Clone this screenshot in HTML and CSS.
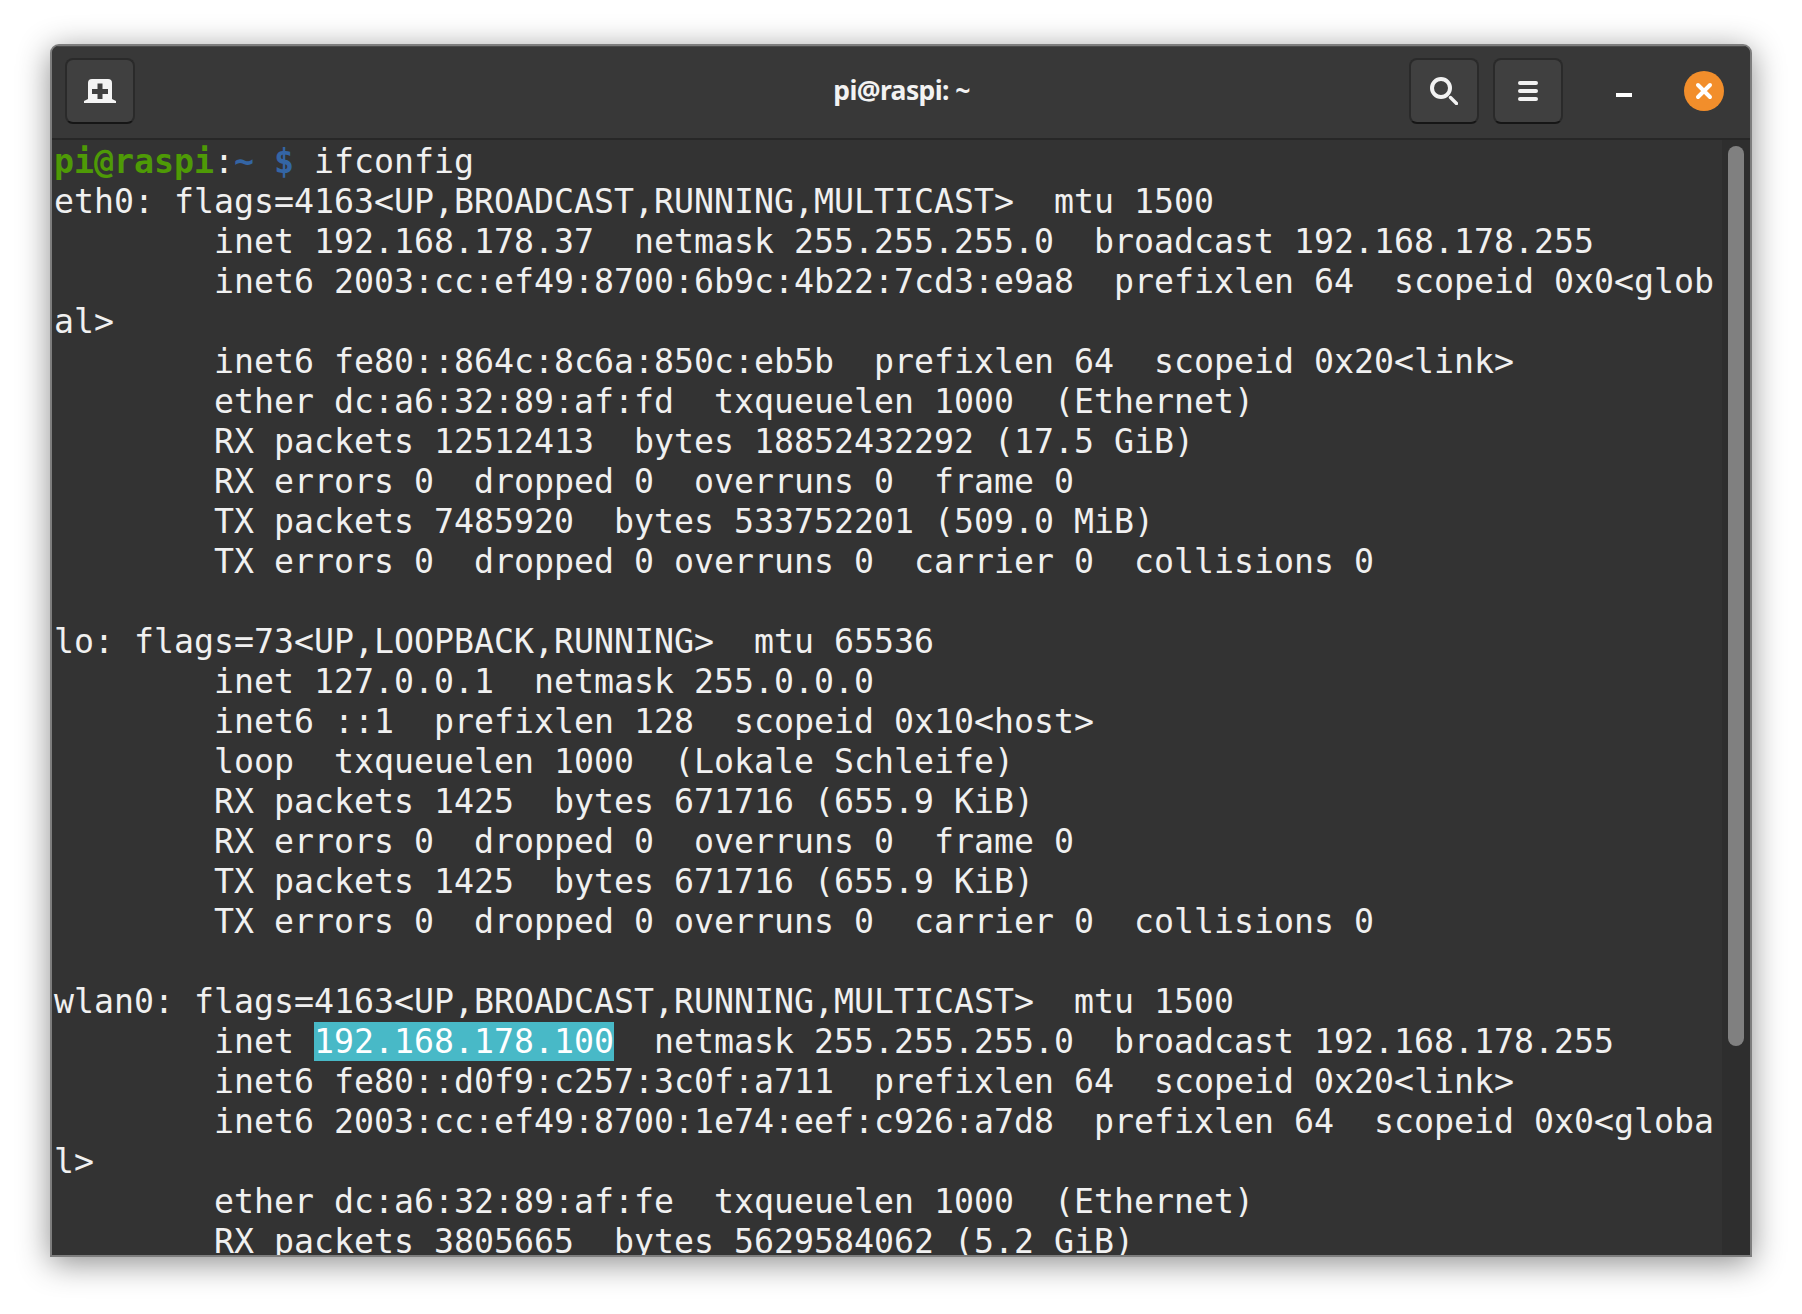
FILE: index.html
```html
<!DOCTYPE html>
<html lang="en">
<head>
<meta charset="utf-8">
<title>pi@raspi: ~</title>
<link rel="stylesheet" href="styles.css">
</head>
<body>
<div class="window">
  <header class="titlebar">
    <div class="group-left">
      <button class="btn" aria-label="New tab">
        <svg width="32" height="24" viewBox="0 0 32 24"><path fill="#f4f4f4" fill-rule="evenodd" d="M4 20V4a4 4 0 0 1 4-4h16a4 4 0 0 1 4 4v16l4 2v2H0v-2zM13.500 4.500v5.500H8v5h5.500v5h5v-5H24v-5h-5.500V4.500z"/></svg>
      </button>
    </div>
    <div class="title">pi@raspi: ~</div>
    <div class="group-right">
      <button class="btn" aria-label="Search">
        <svg width="28" height="28" viewBox="0 0 28 28"><circle cx="11" cy="11" r="9" fill="none" stroke="#f2f2f2" stroke-width="4"/><path d="M20.500 20.500l6 6" stroke="#f2f2f2" stroke-width="3.400" stroke-linecap="round"/></svg>
      </button>
      <button class="btn" aria-label="Menu">
        <svg width="20" height="20" viewBox="0 0 20 20"><path d="M2 2h16M2 10h16M2 18h16" stroke="#f2f2f2" stroke-width="4" stroke-linecap="round"/></svg>
      </button>
      <div class="minimize"></div>
      <div class="close">
        <svg width="18" height="18" viewBox="0 0 18 18"><path d="M3 3l12 12M15 3L3 15" stroke="#fff" stroke-width="4" stroke-linecap="round"/></svg>
      </div>
    </div>
  </header>
  <main class="terminal">
<pre class="output"><span class="user">pi@raspi</span>:<span class="path">~ $</span> ifconfig
eth0: flags=4163&lt;UP,BROADCAST,RUNNING,MULTICAST&gt;  mtu 1500
        inet 192.168.178.37  netmask 255.255.255.0  broadcast 192.168.178.255
        inet6 2003:cc:ef49:8700:6b9c:4b22:7cd3:e9a8  prefixlen 64  scopeid 0x0&lt;glob
al&gt;
        inet6 fe80::864c:8c6a:850c:eb5b  prefixlen 64  scopeid 0x20&lt;link&gt;
        ether dc:a6:32:89:af:fd  txqueuelen 1000  (Ethernet)
        RX packets 12512413  bytes 18852432292 (17.5 GiB)
        RX errors 0  dropped 0  overruns 0  frame 0
        TX packets 7485920  bytes 533752201 (509.0 MiB)
        TX errors 0  dropped 0 overruns 0  carrier 0  collisions 0

lo: flags=73&lt;UP,LOOPBACK,RUNNING&gt;  mtu 65536
        inet 127.0.0.1  netmask 255.0.0.0
        inet6 ::1  prefixlen 128  scopeid 0x10&lt;host&gt;
        loop  txqueuelen 1000  (Lokale Schleife)
        RX packets 1425  bytes 671716 (655.9 KiB)
        RX errors 0  dropped 0  overruns 0  frame 0
        TX packets 1425  bytes 671716 (655.9 KiB)
        TX errors 0  dropped 0 overruns 0  carrier 0  collisions 0

wlan0: flags=4163&lt;UP,BROADCAST,RUNNING,MULTICAST&gt;  mtu 1500
        inet <span class="selected">192.168.178.100</span>  netmask 255.255.255.0  broadcast 192.168.178.255
        inet6 fe80::d0f9:c257:3c0f:a711  prefixlen 64  scopeid 0x20&lt;link&gt;
        inet6 2003:cc:ef49:8700:1e74:eef:c926:a7d8  prefixlen 64  scopeid 0x0&lt;globa
l&gt;
        ether dc:a6:32:89:af:fe  txqueuelen 1000  (Ethernet)
        RX packets 3805665  bytes 5629584062 (5.2 GiB)</pre>
    <div class="scrollbar"><div class="thumb"></div></div>
  </main>
</div>
</body>
</html>
```
FILE: styles.css
```css
* { box-sizing: border-box; }
html, body { margin: 0; height: 100%; background: #fff; overflow: hidden; }
body { padding: 44px 50px 57px 50px; }
.window {
  height: 1213px;
  display: flex;
  flex-direction: column;
  border: 2px solid #7d7d7d;
  border-radius: 9px 9px 0 0;
  background: #333;
  overflow: hidden;
  box-shadow: 0 6px 32px rgba(0,0,0,.45);
}
.titlebar {
  flex: none;
  height: 94px;
  display: grid;
  grid-template-columns: 1fr auto 1fr;
  align-items: center;
  padding: 0 26px 2px 13px;
  background: #383838;
  border-bottom: 2px solid #272727;
  box-shadow: inset 0 1px 0 #4a4a4a;
}
.group-left { display: flex; align-items: center; }
.group-right { display: flex; align-items: center; justify-content: flex-end; gap: 14px; }
.btn {
  flex: none;
  width: 70px;
  height: 66px;
  display: flex;
  align-items: center;
  justify-content: center;
  padding: 0;
  background: #404040;
  border: 2px solid #2a2a2a;
  border-bottom-color: #161616;
  border-radius: 8px;
}
.title {
  padding: 0 0 2px 14px;
  color: #f2f2f2;
  font: 700 26.500px "Noto Sans", sans-serif;
  letter-spacing: -0.6px;
}
.minimize { flex: none; width: 16px; height: 4px; margin: 8px 38px 0 39px; background: #fff; }
.close {
  flex: none;
  width: 40px;
  height: 40px;
  border-radius: 50%;
  background: #f28e2b;
  display: flex;
  align-items: center;
  justify-content: center;
}
.terminal { flex: 1; min-height: 0; display: flex; background: #333; }
.output {
  flex: 1;
  min-width: 0;
  margin: 0;
  padding: 2px 0 0 2px;
  overflow: hidden;
  color: #f0f0f0;
  font: 33.220px/40px "DejaVu Sans Mono", monospace;
}
.user { color: #4e9a06; font-weight: bold; }
.path { color: #3465a4; font-weight: bold; }
.selected { background: #48b9c7; color: #fff; }
.scrollbar { flex: none; width: 28px; background: #2e2e2e; padding: 6px 6px 0 6px; }
.thumb { height: 900px; background: #808080; border-radius: 8px; }
```
